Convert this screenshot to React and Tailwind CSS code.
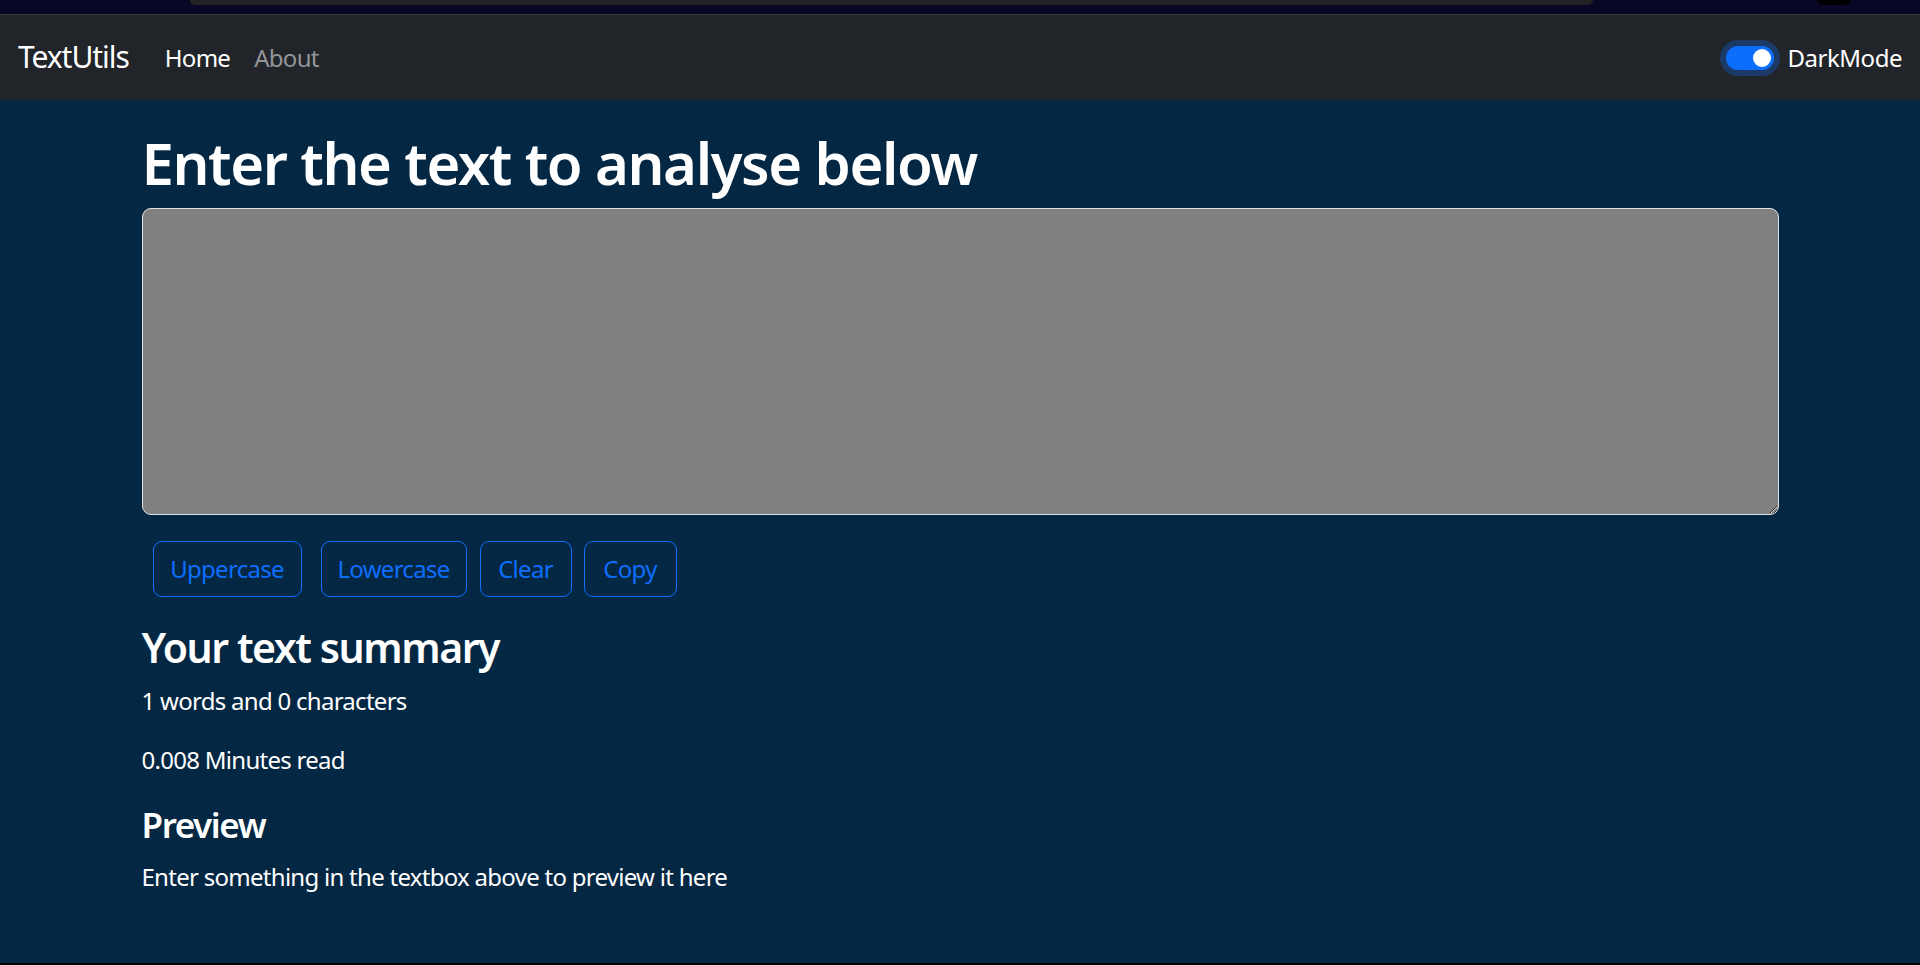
import React, { useState } from "react";

const App = () => {
  const [text, setText] = useState("");

  const words = text.split(" ").length;
  const minutes = 0.008 * words;

  return (
    <div className="h-[965px] flex flex-col bg-black font-['Noto_Sans','Open_Sans',sans-serif] text-white">
      {/* browser chrome strip */}
      <div className="h-[14px] shrink-0 bg-[#080826] flex items-start">
        <div className="ml-[190px] w-[1403px] h-[5px] bg-[#232326] rounded-b-[10px]" />
        <div className="ml-[224px] w-[33px] h-[5px] bg-black rounded-b-full" />
      </div>
      <div className="h-px shrink-0 bg-[#3c3c3c]" />

      {/* Navbar */}
      <nav className="h-[85px] shrink-0 bg-[#212529] flex items-center px-[18px]">
        <span className="text-[30px] leading-none mr-[24px] pb-[2px] tracking-[-0.035em]">TextUtils</span>
        <a className="text-[24px] leading-none px-[12px] text-white tracking-[-0.03em]">Home</a>
        <a className="text-[24px] leading-none px-[12px] text-[#939598] tracking-[-0.03em]">About</a>
        <div className="ml-auto flex items-center">
          <span className="w-[48px] h-[24px] rounded-full bg-[#0d6efd] ring-[6px] ring-[#1b3a68] flex items-center justify-end pr-[3px]">
            <span className="w-[18px] h-[18px] rounded-full bg-white" />
          </span>
          <span className="text-[24px] leading-none ml-[14px] tracking-[-0.02em]">DarkMode</span>
        </div>
      </nav>

      {/* Main */}
      <div className="flex-1 bg-[#042743]">
        <div className="w-[1637px] mx-auto pt-[28px]">
          <h1 className="text-[58px] leading-[1.2] font-semibold tracking-[-0.024em]">
            Enter the text to analyse below
          </h1>
          <textarea
            value={text}
            onChange={(e) => setText(e.target.value)}
            className="block mt-[10px] w-full h-[307px] bg-[#808080] border border-[#dee2e6] rounded-[9px] px-[18px] py-[9px] text-[24px] text-white outline-none"
          />

          <div className="flex mt-[26px] ml-[11px] text-[24px] tracking-[-0.03em]">
            <button className="h-[56px] w-[149px] border border-[#0d6efd] rounded-[9px] text-[#0d6efd]">
              Uppercase
            </button>
            <button className="h-[56px] w-[146px] ml-[19px] border border-[#0d6efd] rounded-[9px] text-[#0d6efd]">
              Lowercase
            </button>
            <button className="h-[56px] w-[92px] ml-[13px] border border-[#0d6efd] rounded-[9px] text-[#0d6efd]">
              Clear
            </button>
            <button className="h-[56px] w-[93px] ml-[12px] border border-[#0d6efd] rounded-[9px] text-[#0d6efd]">
              Copy
            </button>
          </div>

          <h2 className="mt-[26px] text-[41px] leading-[1.2] font-semibold tracking-[-0.035em]">
            Your text summary
          </h2>
          <p className="mt-[11px] text-[24px] leading-[1.5] tracking-[-0.03em]">
            {words} words and {text.length} characters
          </p>
          <p className="mt-[23px] text-[24px] leading-[1.5] tracking-[-0.03em]">
            {minutes} Minutes read
          </p>
          <h3 className="mt-[26px] text-[35px] leading-[1.2] font-semibold tracking-[-0.04em]">
            Preview
          </h3>
          <p className="mt-[13px] text-[24px] leading-[1.5] tracking-[-0.03em]">
            {text.length > 0 ? text : "Enter something in the textbox above to preview it here"}
          </p>
        </div>
      </div>
      <div className="h-[2px] shrink-0 bg-black" />
    </div>
  );
};

export default App;
